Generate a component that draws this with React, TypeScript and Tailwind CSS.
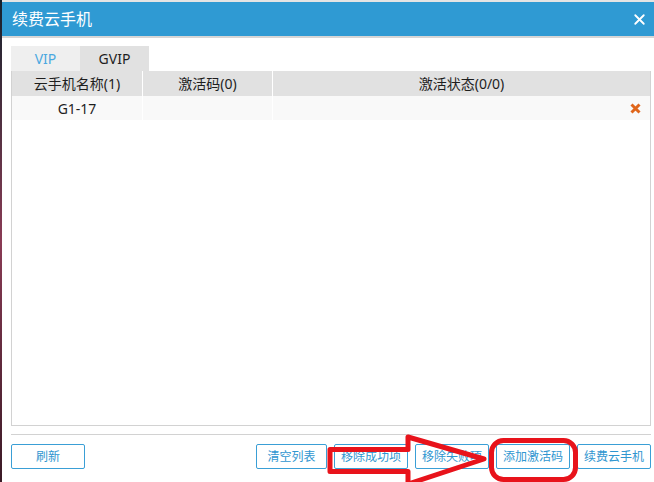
import { X } from 'lucide-react'

const columns = [
  { label: '云手机名称(1)', width: 'w-[130px]' },
  { label: '激活码(0)', width: 'w-[130px]' },
  { label: '激活状态(0/0)', width: 'flex-1' },
]

const actions = [
  { label: '清空列表', width: 'w-[71px]' },
  { label: '移除成功项', width: 'w-[74px]' },
  { label: '移除失败项', width: 'w-[74px]' },
  { label: '添加激活码', width: 'w-[74px]' },
  { label: '续费云手机', width: 'w-[74px]' },
]

function ActionButton({ label, width }: { label: string; width: string }) {
  return (
    <button className={`${width} h-[25px] rounded-[2px] border border-[#3a9fd6] bg-white text-[12px] leading-none text-[#2f96d0]`}>
      {label}
    </button>
  )
}

function Annotations() {
  return (
    <svg className="pointer-events-none absolute inset-0" width="654" height="482" viewBox="0 0 654 482">
      <path
        d="M330 449.5 L408 449.5 L408 437 L484 459 L408 484 L408 471.5 L330 471.5 Z"
        fill="none"
        stroke="#e8131b"
        strokeWidth="5"
        strokeLinejoin="round"
      />
      <rect x="491.5" y="440.5" width="84" height="39" rx="12" fill="none" stroke="#e8131b" strokeWidth="5" />
    </svg>
  )
}

export default function App() {
  return (
    <div
      className="relative flex h-[482px] w-[654px] overflow-hidden bg-white text-[#1e1e1e]"
      style={{ fontFamily: '"Noto Sans", "Noto Sans CJK SC", sans-serif' }}
    >
      <div className="w-[2px] shrink-0 bg-gradient-to-b from-[#14202c] via-[#8a3b55] to-[#3a1a26]" />

      <div className="flex flex-1 flex-col">
        <div className="h-[2px] bg-[#e4e4e4]" />
        <header className="flex h-[34px] items-center justify-between bg-[#2f9ad3] pl-[10px] pr-[6px]">
          <span className="text-[16px] text-white">续费云手机</span>
          <X className="h-[17px] w-[17px] text-white" strokeWidth={2.6} />
        </header>
        <div className="h-[2px] bg-[#d6d6d6]" />

        <div className="flex flex-1 flex-col pl-[9px] pr-[3px] pt-[8px]">
          <div className="flex h-[25px] text-[14px]">
            <div className="flex w-[69px] items-center justify-center bg-[#efefef] text-[#4ba8e0]">VIP</div>
            <div className="flex w-[69px] items-center justify-center bg-[#e1e1e1]">GVIP</div>
          </div>

          <div className="flex h-[355px] flex-col border-x border-b border-[#d2d2d2]">
            <div className="flex h-[25px] bg-[#e1e1e1] text-[14px]">
              {columns.map((col, i) => (
                <div
                  key={col.label}
                  className={`${col.width} flex items-center justify-center ${i > 0 ? 'border-l border-white' : ''}`}
                >
                  {col.label}
                </div>
              ))}
            </div>
            <div className="flex h-[24px] bg-[#f9f9f9] text-[14px]">
              <div className="flex w-[130px] items-center justify-center">G1-17</div>
              <div className="w-[130px] border-l border-white" />
              <div className="flex flex-1 items-center justify-end border-l border-white pr-[9px]">
                <svg width="11" height="11" viewBox="0 0 11 11">
                  <path d="M1.5 1.5 L9.5 9.5 M9.5 1.5 L1.5 9.5" stroke="#e0661b" strokeWidth="3" />
                </svg>
              </div>
            </div>
          </div>

          <div className="mt-[8px] h-px bg-[#d2d2d2]" />

          <div className="mt-[9px] flex items-center">
            <ActionButton label="刷新" width="w-[74px]" />
            <div className="ml-auto flex gap-[7px]">
              {actions.map((a) => (
                <ActionButton key={a.label} label={a.label} width={a.width} />
              ))}
            </div>
          </div>
        </div>
      </div>

      <Annotations />
    </div>
  )
}
